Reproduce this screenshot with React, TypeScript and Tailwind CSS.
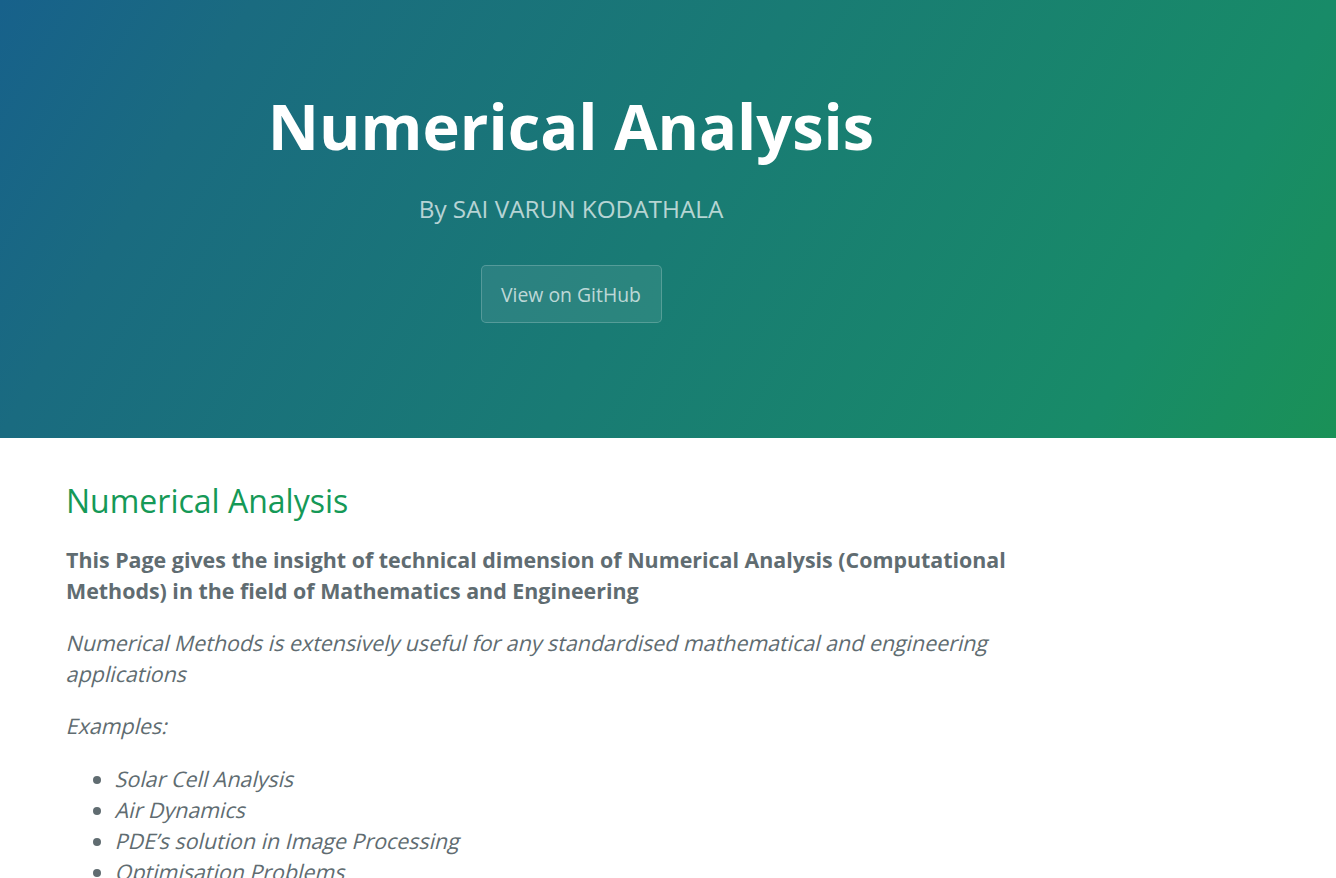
import React from "react";

const examples = [
  "Solar Cell Analysis",
  "Air Dynamics",
  "PDE’s solution in Image Processing",
  "Optimisation Problems",
  "Signal Processing",
];

// the page renders its italics as slanted regular glyphs, so slant each line
const Slanted = ({ children }: { children: React.ReactNode }) => (
  <span className="inline-block origin-[0_72%] -skew-x-[14deg]">{children}</span>
);

const App = () => {
  return (
    <div
      className="min-h-[878px] bg-white text-[#606c71]"
      style={{ fontFamily: '"Open Sans", "Helvetica Neue", Arial, sans-serif' }}
    >
      {/* Page header */}
      <header className="h-[438px] bg-[linear-gradient(120deg,#17618b_0%,#1a6b80_16%,#188b68_84%,#1a9157_100%)] text-white">
        <div className="w-[1142px] flex flex-col items-center pt-[91px]">
          <h1 className="text-[63.1px] font-bold leading-[1.1]">Numerical Analysis</h1>
          <h2 className="mt-[32px] text-[24.3px] font-normal leading-[1.4] text-white/70">
            By SAI VARUN KODATHALA
          </h2>
          <a
            href="#"
            className="mt-[39px] flex h-[58px] w-[181px] items-center justify-center rounded-[5px] border border-white/20 bg-white/[0.08] text-[19.4px] text-white/70"
          >
            View on GitHub
          </a>
        </div>
      </header>

      {/* Main content */}
      <main className="max-w-[1066px] pl-[66px] pt-[42px] text-[21.4px] leading-[31px]">
        <h2 className="mb-[22px] text-[32px] font-normal leading-[1.3] text-[#159957]">
          Numerical Analysis
        </h2>
        <p className="mb-[21px] font-bold">
          This Page gives the insight of technical dimension of Numerical Analysis (Computational
          Methods) in the field of Mathematics and Engineering
        </p>
        <p className="mb-[21px]">
          <Slanted>
            Numerical Methods is extensively useful for any standardised mathematical and engineering
          </Slanted>
          <br />
          <Slanted>applications</Slanted>
        </p>
        <p className="mb-[22px]">
          <Slanted>Examples:</Slanted>
        </p>
        <ul className="list-disc pl-[49px]">
          {examples.map((item) => (
            <li key={item}>
              <Slanted>{item}</Slanted>
            </li>
          ))}
        </ul>
      </main>
    </div>
  );
};

export default App;
